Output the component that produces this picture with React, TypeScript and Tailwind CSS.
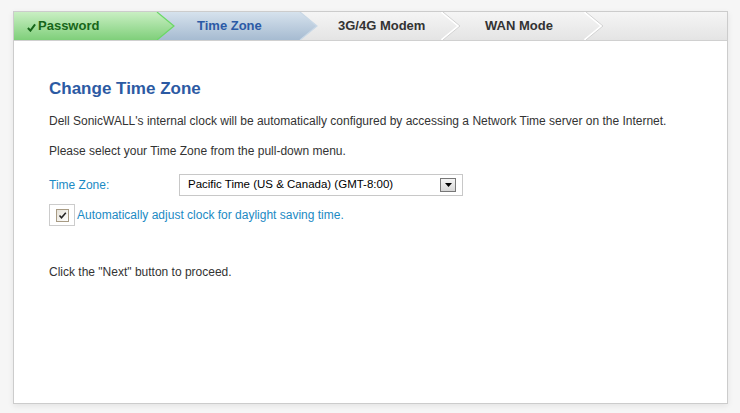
import React from 'react';

const font = { fontFamily: '"Liberation Sans", Arial, sans-serif' };

interface Step {
  label: string;
  pad: string;
  state: 'done' | 'active' | 'todo';
}

const steps: Step[] = [
  { label: 'Password', pad: 'pl-[13px]', state: 'done' },
  { label: 'Time Zone', pad: 'pl-[40px]', state: 'active' },
  { label: '3G/4G Modem', pad: 'pl-[38px]', state: 'todo' },
  { label: 'WAN Mode', pad: 'pl-[42px]', state: 'todo' },
];

function StepTab({ step, index }: { step: Step; index: number }) {
  const z = 10 - index;
  return (
    <div className="relative w-[143px] h-full" style={{ zIndex: z }}>
      {step.state !== 'todo' && (
        <svg
          className="absolute left-0 top-0"
          width="161"
          height="28"
          viewBox="0 0 161 28"
        >
          <defs>
            <linearGradient id={`g${index}`} x1="0" y1="0" x2="0" y2="1">
              {step.state === 'done' ? (
                <>
                  <stop offset="0" stopColor="#c9efc3" />
                  <stop offset="1" stopColor="#7fcf7a" />
                </>
              ) : (
                <>
                  <stop offset="0" stopColor="#d6e2ed" />
                  <stop offset="1" stopColor="#a6bbd1" />
                </>
              )}
            </linearGradient>
          </defs>
          <polygon
            points="0,0 143,0 160,14 143,28 0,28"
            fill={`url(#g${index})`}
          />
          <polyline
            points="143,0 160,14 143,28"
            fill="none"
            stroke={step.state === 'done' ? '#6ad865' : '#c9d8e6'}
            strokeWidth="1.2"
          />
        </svg>
      )}
      {step.state === 'todo' && (
        <svg
          className="absolute left-0 top-0"
          width="161"
          height="28"
          viewBox="0 0 161 28"
        >
          <polyline
            points="143,0 160,14 143,28"
            fill="none"
            stroke="#ffffff"
            strokeWidth="2"
            transform="translate(-1.5,0)"
          />
          <polyline
            points="143,0 160,14 143,28"
            fill="none"
            stroke="#d2d2d2"
            strokeWidth="1"
          />
        </svg>
      )}
      <div
        className={`relative flex items-center h-full text-[13px] font-bold ${step.pad} ${
          step.state === 'done'
            ? 'text-[#17661a]'
            : step.state === 'active'
            ? 'text-[#2b5aa6]'
            : 'text-[#333333]'
        }`}
      >
        {step.state === 'done' && (
          <svg width="9" height="9" viewBox="0 0 10 10" className="mr-[2px] mt-[2px]">
            <path d="M1 5.5 L3.8 8.5 L9 1.5" fill="none" stroke="#17661a" strokeWidth="2.2" />
          </svg>
        )}
        {step.label}
      </div>
    </div>
  );
}

export default function App() {
  return (
    <div className="w-[740px] h-[413px] bg-[#f6f6f6] pt-[11px] pl-[13px]" style={font}>
      <div className="w-[715px] h-[393px] bg-white border border-[#cccccc] shadow-[0_2px_6px_rgba(0,0,0,0.08)] flex flex-col">
        {/* Wizard steps */}
        <div className="h-[29px] flex border-b border-[#d0d0d0] bg-gradient-to-b from-[#f5f5f5] to-[#e4e4e4] overflow-hidden">
          {steps.map((s, i) => (
            <StepTab key={s.label} step={s} index={i} />
          ))}
        </div>

        <div className="pl-[35px] pt-[38px] text-[12px] text-[#333333]">
          <h1 className="text-[17px] leading-[20px] font-bold text-[#2c5aa3]">Change Time Zone</h1>
          <p className="mt-[14px] leading-[16px]">
            Dell SonicWALL's internal clock will be automatically configured by accessing a Network Time server on the Internet.
          </p>
          <p className="mt-[14px] leading-[16px]">Please select your Time Zone from the pull-down menu.</p>

          <div className="mt-[15px] flex items-center h-[22px]">
            <span className="w-[130px] text-[#1b8ac4]">Time Zone:</span>
            <div className="w-[284px] h-[22px] border border-[#c8c8c8] flex items-center justify-between pl-[8px] pr-[6px] text-[11.5px] text-black">
              <span>Pacific Time (US &amp; Canada) (GMT-8:00)</span>
              <div className="w-[16px] h-[14px] border border-[#777777] bg-gradient-to-b from-[#f4f4f4] to-[#d6d6d6] flex items-center justify-center">
                <svg width="7" height="4" viewBox="0 0 7 4">
                  <polygon points="0,0 7,0 3.5,4" fill="#000" />
                </svg>
              </div>
            </div>
          </div>

          <div className="mt-[8px] flex items-center">
            <div className="w-[26px] h-[22px] border border-[#cccccc] flex items-center justify-center">
              <div className="w-[13px] h-[13px] border border-[#a89b84] bg-gradient-to-br from-[#e6e2d8] to-white flex items-center justify-center">
                <svg width="9" height="9" viewBox="0 0 9 9">
                  <path d="M1.5 4.5 L3.5 6.8 L7.8 1.8" fill="none" stroke="#222" strokeWidth="1.5" />
                </svg>
              </div>
            </div>
            <span className="ml-[2px] text-[#1b8ac4]">Automatically adjust clock for daylight saving time.</span>
          </div>

          <p className="mt-[38px] leading-[16px]">Click the "Next" button to proceed.</p>
        </div>
      </div>
    </div>
  );
}
